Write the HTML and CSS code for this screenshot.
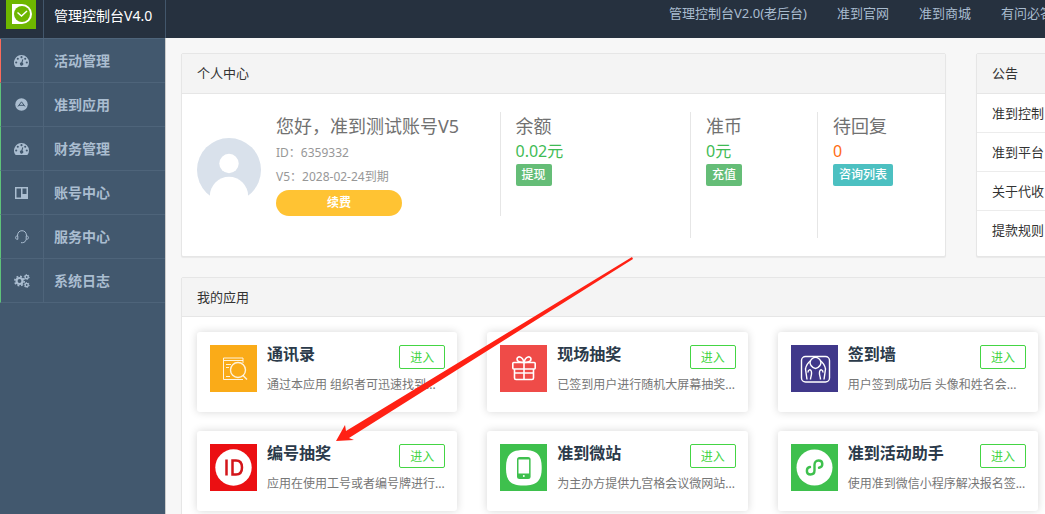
FILE: index.html
```html
<!DOCTYPE html>
<html lang="zh-CN">
<head>
<meta charset="utf-8">
<title>管理控制台V4.0</title>
<link rel="stylesheet" href="styles.css">
</head>
<body>
<svg class="defs" aria-hidden="true">
  <symbol id="i-gauge" viewBox="0 0 15 12">
    <path fill="currentColor" fill-rule="evenodd" d="M7.5 0A7.5 7.5 0 0 1 15 7.5c0 1.500-.4 2.900-1.200 4-.2.300-.4.500-.8.500H2c-.4 0-.6-.2-.8-.5A7.500 7.500 0 0 1 7.500 0zM2.200 6.400a1.050 1.050 0 1 0 0 2.100 1.050 1.050 0 0 0 0-2.100zM3.800 2.700a1.050 1.050 0 1 0 0 2.100 1.050 1.050 0 0 0 0-2.100zM7.500 1.100a1.050 1.050 0 1 0 0 2.100 1.050 1.050 0 0 0 0-2.100zM11.200 2.700a1.050 1.050 0 1 0 0 2.100 1.050 1.050 0 0 0 0-2.100zM12.800 6.400a1.050 1.050 0 1 0 0 2.100 1.050 1.050 0 0 0 0-2.100zM8.300 4.200 7.400 7.300a1.600 1.600 0 1 0 1.100.3L9.300 4.500z"/>
  </symbol>
</svg>
<div class="page">
  <header class="topbar">
    <a class="logo" href="#" aria-label="首页">
      <svg width="30" height="29" viewBox="0 0 30 29"><path fill="#6eb600" d="M0 0h30v29H0z"/><path fill="#fff" d="M6 4h10a10 10 0 0 1 0 20H6z"/><circle cx="16" cy="14" r="8" fill="#6eb600"/><path d="M11.500 12.500l4 3.500 5.500-5" fill="none" stroke="#fff" stroke-width="1.500"/></svg>
    </a>
    <a class="brand" href="#">管理控制台V4.0</a>
    <nav class="topnav">
      <a href="#">管理控制台V2.0(老后台)</a>
      <a href="#">准到官网</a>
      <a href="#">准到商城</a>
      <a href="#">有问必答</a>
    </nav>
  </header>
  <div class="body">
    <aside class="sidebar">
      <nav class="menu">
        <a class="item active" href="#"><span class="ico"><svg width="15" height="12"><use href="#i-gauge"/></svg></span><span class="label">活动管理</span></a>
        <a class="item" href="#"><span class="ico"><svg width="13" height="13" viewBox="0 0 13 13"><circle cx="6.500" cy="6.500" r="6.200" fill="currentColor"/><path d="M3 8.500l3.500-4.700L10 8.500M3.800 7.300h5.400" fill="none" stroke="#42586e"/></svg></span><span class="label">准到应用</span></a>
        <a class="item" href="#"><span class="ico"><svg width="15" height="12"><use href="#i-gauge"/></svg></span><span class="label">财务管理</span></a>
        <a class="item" href="#"><span class="ico"><svg width="13" height="12" viewBox="0 0 13 12"><path fill="currentColor" fill-rule="evenodd" d="M0 0h13v12H0zM1.500 1.500v9H6v-9zM7.500 1.500V7h4V1.500z"/></svg></span><span class="label">账号中心</span></a>
        <a class="item" href="#"><span class="ico"><svg width="14" height="14" viewBox="0 0 14 14"><path d="M2.500 6C2.500 2.500 4.300.7 7 .7S11.500 2.500 11.500 6M2.800 6C1.300 5.800.6 6.500.6 7.600s.7 1.900 2.200 1.700zM11.200 6c1.500-.2 2.200.5 2.200 1.600s-.7 1.900-2.200 1.700zM11 9.500c-.4 2-1.400 3-3.500 3.200H6" fill="none" stroke="currentColor"/></svg></span><span class="label">服务中心</span></a>
        <a class="item" href="#"><span class="ico"><svg width="16" height="14" viewBox="0 0 16 14"><g fill="none" stroke="currentColor"><circle cx="5.500" cy="7" r="3" stroke-width="2.200"/><circle cx="5.500" cy="7" r="4.700" stroke-width="1.600" stroke-dasharray="1.850 1.840"/><circle cx="12.700" cy="3" r="1.600" stroke-width="1.400"/><circle cx="12.700" cy="3" r="2.500" stroke-width="1" stroke-dasharray="1.300 1.310"/><circle cx="12.700" cy="11" r="1.600" stroke-width="1.400"/><circle cx="12.700" cy="11" r="2.500" stroke-width="1" stroke-dasharray="1.300 1.310"/></g></svg></span><span class="label">系统日志</span></a>
      </nav>
      <div class="sidefoot"></div>
    </aside>
    <main class="content">
      <section class="panel">
        <h2 class="panel-head">个人中心</h2>
        <div class="profile">
          <div class="user">
            <svg class="avatar" width="64" height="64" viewBox="0 0 64 64"><circle cx="32" cy="32" r="32" fill="#d9e1eb"/><circle cx="32" cy="25.500" r="9.700" fill="#fff"/><circle cx="32" cy="58" r="19.200" fill="#fff"/></svg>
            <div class="info">
              <div class="name">您好，准到测试账号V5</div>
              <div class="meta">ID：6359332</div>
              <div class="meta">V5：2028-02-24到期</div>
              <button class="renew">续费</button>
            </div>
          </div>
          <div class="stat short"><div class="name">余额</div><div class="value">0.02元</div><button class="tag">提现</button></div>
          <div class="stat"><div class="name">准币</div><div class="value">0元</div><button class="tag">充值</button></div>
          <div class="stat"><div class="name">待回复</div><div class="value warn">0</div><button class="tag teal">咨询列表</button></div>
        </div>
      </section>
      <section class="panel">
        <h2 class="panel-head">公告</h2>
        <ul class="news">
          <li><a href="#">准到控制</a></li>
          <li><a href="#">准到平台</a></li>
          <li><a href="#">关于代收</a></li>
          <li><a href="#">提款规则</a></li>
        </ul>
      </section>
      <section class="panel apps-panel">
        <h2 class="panel-head">我的应用</h2>
        <div class="apps">
          <article class="app">
            <svg width="47" height="47" viewBox="0 0 47 47"><path fill="#faab18" d="M0 0h47v47H0z"/><g fill="none" stroke="#fff" stroke-opacity=".85"><path d="M33 18v-5H13.500v21.500H33M14 15.500h19M16 19.500h5M16 22.500h3M16 31.500h4"/><circle cx="28" cy="25" r="7.500" stroke-width="1.400"/><path d="M33 30.500l4 4" stroke-width="1.500"/></g></svg>
            <div class="text"><div class="row"><h3>通讯录</h3><button class="enter">进入</button></div><p>通过本应用 组织者可迅速找到...</p></div>
          </article>
          <article class="app">
            <svg width="47" height="47" viewBox="0 0 47 47"><path fill="#ef4b48" d="M0 0h47v47H0z"/><g fill="none" stroke="#fff" stroke-width="1.600"><rect x="12.800" y="17.500" width="22.400" height="6.500" rx="1"/><path d="M14.500 24v9q0 1.500 1.500 1.500h16q1.500 0 1.500-1.500v-9M24 17.500v17M14.500 28h19M24 17.500c-4 0-7-1-7-3.500 0-3 5.500-3.500 7 3.500 1.500-7 7-6.500 7-3.500 0 2.500-3 3.500-7 3.500z"/></g></svg>
            <div class="text"><div class="row"><h3>现场抽奖</h3><button class="enter">进入</button></div><p>已签到用户进行随机大屏幕抽奖...</p></div>
          </article>
          <article class="app">
            <svg width="47" height="47" viewBox="0 0 47 47"><path fill="#40388a" d="M0 0h47v47H0z"/><g fill="none" stroke="#fff" stroke-width="1.400"><rect x="10.500" y="11.500" width="28" height="25.500" rx="4"/><path d="M20 20.500a5.300 5.300 0 1 1 9 0q-4.500 6-9 0z"/><path d="M20 15.500q-4.500 3-5.500 8.500l1.500 10.500M19.500 34.500c0-3 1.500-4 1-7.500s-3.500-2.500-3.500.5M29 15.500q4.500 3 5.500 8.500L33 34.500M29.500 34.500c0-3-1.500-4-1-7.500s3.500-2.500 3.500.5"/></g></svg>
            <div class="text"><div class="row"><h3>签到墙</h3><button class="enter">进入</button></div><p>用户签到成功后 头像和姓名会...</p></div>
          </article>
          <article class="app">
            <svg width="47" height="47" viewBox="0 0 47 47"><path fill="#eb0f12" d="M0 0h47v47H0z"/><circle cx="23.500" cy="23.500" r="18.200" fill="#fff"/><path d="M16.500 15.500v16M22.500 16.500h3.500q6 0 6 7t-6 7h-3.500z" fill="none" stroke="#d3151a" stroke-width="2.500"/></svg>
            <div class="text"><div class="row"><h3>编号抽奖</h3><button class="enter">进入</button></div><p>应用在使用工号或者编号牌进行...</p></div>
          </article>
          <article class="app">
            <svg width="47" height="47" viewBox="0 0 47 47"><path fill="#3ec04d" d="M0 0h47v47H0z"/><path fill="#fff" d="M23.800 6C37 6 41.700 11 41.700 23.800S37 41.500 23.800 41.500 6 37 6 23.800 11 6 23.800 6z"/><rect x="17" y="13" width="13.600" height="22" rx="2.500" fill="#3ec04d"/><path fill="#fff" d="M18.500 15.500h10.600v14H18.500z"/><circle cx="23.800" cy="32" r="1" fill="#fff"/></svg>
            <div class="text"><div class="row"><h3>准到微站</h3><button class="enter">进入</button></div><p>为主办方提供九宫格会议微网站...</p></div>
          </article>
          <article class="app">
            <svg width="47" height="47" viewBox="0 0 47 47"><path fill="#3ec04d" d="M0 0h47v47H0z"/><circle cx="23.500" cy="23.500" r="18" fill="#fff"/><path d="M19 23c-4 .4-4.500 7.500.5 7.500 3 0 4-2 4-4v-5.500c0-2.500 1.500-4.500 4-4.500 5 0 5 6.500.5 7.200" fill="none" stroke="#3ec04d" stroke-width="2.400" stroke-linecap="round"/></svg>
            <div class="text"><div class="row"><h3>准到活动助手</h3><button class="enter">进入</button></div><p>使用准到微信小程序解决报名签...</p></div>
          </article>
        </div>
      </section>
    </main>
  </div>
  <svg class="arrow" width="298" height="186" viewBox="0 0 298 186" aria-hidden="true"><path fill="#ff2114" d="M0 185l9-16 1 6L296 1l1 2L13 182l5 2z"/></svg>
</div>
</body>
</html>
```
FILE: styles.css
```css
* { box-sizing: border-box; }
html { overflow: hidden; }
body {
  margin: 0;
  overflow: hidden;
  background: #f7f7f7;
  color: #333;
  font: 13px/20px "Noto Sans", "Noto Sans CJK SC", sans-serif;
}
a { color: inherit; text-decoration: none; }
h2, h3, p, ul { margin: 0; padding: 0; font-weight: normal; }
button { font: inherit; border: 0; padding: 0; cursor: pointer; }
svg { display: block; flex: none; }
.defs { position: absolute; width: 0; height: 0; }

/* The layout runs slightly past the right edge of the window */
.page {
  position: relative;
  display: flex;
  flex-direction: column;
  width: calc(100% + 8px);
  min-height: 100vh;
}

.topbar { display: flex; height: 38px; background: #26313f; }
.logo { width: 44px; padding-left: 6px; border-right: 1px solid #42566b; }
.brand {
  width: 122px;
  padding: 6px 0 0 10px;
  border-right: 1px solid #42566b;
  color: #fff;
  font-size: 14px;
  white-space: nowrap;
}
.topnav {
  display: flex;
  gap: 30px;
  margin-left: auto;
  padding-top: 3px;
  color: #a9bccf;
  white-space: nowrap;
}

.body { display: flex; flex: 1; }
.sidebar {
  display: flex;
  flex: none;
  flex-direction: column;
  width: 166px;
  border-right: 1px solid #ccc;
  background: #42586e;
  color: #aabdd0;
}
.menu { border-top: 1px solid #4e647a; }
.item {
  display: flex;
  height: 44px;
  border-left: 1px solid #5fc27a;
  border-bottom: 1px solid #4e647a;
  font-size: 14px;
  font-weight: bold;
}
.item.active { border-left-color: #fb6b5b; }
.ico {
  display: flex;
  justify-content: center;
  width: 43px;
  height: 43px;
  padding-right: 1px;
  align-items: center;
  border-right: 1px solid #4e647a;
}
.label { padding: 12px 0 0 10px; }
.sidefoot { height: 8px; margin-top: auto; background: #35495d; }

.content {
  display: grid;
  flex: 1;
  grid-template-columns: minmax(0, 1fr) 77px;
  align-content: start;
  gap: 20px 30px;
  min-width: 0;
  padding: 15px 0 0 15px;
}
.panel {
  min-width: 0;
  border: 1px solid #e6e6e6;
  border-radius: 2px;
  background: #fff;
  box-shadow: 0 1px 1px rgba(0, 0, 0, .06);
}
.panel-head {
  height: 40px;
  padding: 9px 15px;
  border-bottom: 1px solid #e6e6e6;
  background: #f4f4f4;
  font-size: 13px;
}
.apps-panel { grid-column: 1 / -1; }
.apps-panel .panel-head { height: 39px; }

.profile {
  display: grid;
  grid-template-columns: 5fr 3fr 2fr 2fr;
  align-items: start;
  padding: 18px 1px 18px 0;
  height: 162px;
}
.user { display: flex; gap: 15px; padding-left: 15px; }
.avatar { margin-top: 26px; }
.name { height: 29px; color: #717171; font-size: 18px; line-height: 29px; white-space: nowrap; }
.meta { color: #979797; font-size: 12px; line-height: 24px; white-space: nowrap; }
.renew {
  display: block;
  width: 126px;
  height: 26px;
  margin-top: 1px;
  border-radius: 13px;
  background: #ffc333;
  color: #fff;
  font-size: 12px;
  font-weight: bold;
  line-height: 26px;
}
.stat { height: 126px; padding-left: 15px; border-left: 1px solid #e6e6e6; }
.stat.short { height: 104px; }
.value { color: #3fbb55; font-size: 16px; line-height: 20px; }
.value.warn { color: #ff6c13; }
.tag {
  display: block;
  height: 22px;
  margin-top: 3px;
  padding: 0 6px;
  border-radius: 2px;
  background: #65bd77;
  color: #fff;
  font-size: 12px;
  font-weight: 500;
  line-height: 22px;
}
.tag.teal { background: #4cc0c1; }

.news { overflow: hidden; list-style: none; white-space: nowrap; }
.news li { height: 39px; padding: 9px 15px; border-bottom: 1px solid #ececec; }
.news li:last-child { border-bottom: 0; }

.apps {
  display: grid;
  grid-template-columns: repeat(3, minmax(0, 1fr));
  gap: 19px 30px;
  padding: 15px 14px 15px 15px;
}
.app {
  display: flex;
  gap: 10px;
  height: 80px;
  padding: 13px 12px 13px 13px;
  border-radius: 3px;
  box-shadow: 0 0 8px rgba(0, 0, 0, .16);
}
.text { flex: 1; min-width: 0; }
.row { display: flex; justify-content: space-between; height: 30px; }
.app h3 { color: #2b3a4a; font-size: 16px; font-weight: bold; line-height: 18px; }
.app p { color: #767676; font-size: 12px; white-space: nowrap; }
.enter {
  width: 46px;
  height: 24px;
  padding-top: 1px;
  border: 1px solid #44d544;
  border-radius: 2px;
  background: #fff;
  color: #44d544;
  font-size: 12px;
}

/* Pointer drawn over the cards */
.arrow { position: absolute; left: 336px; top: 256px; pointer-events: none; }
```
